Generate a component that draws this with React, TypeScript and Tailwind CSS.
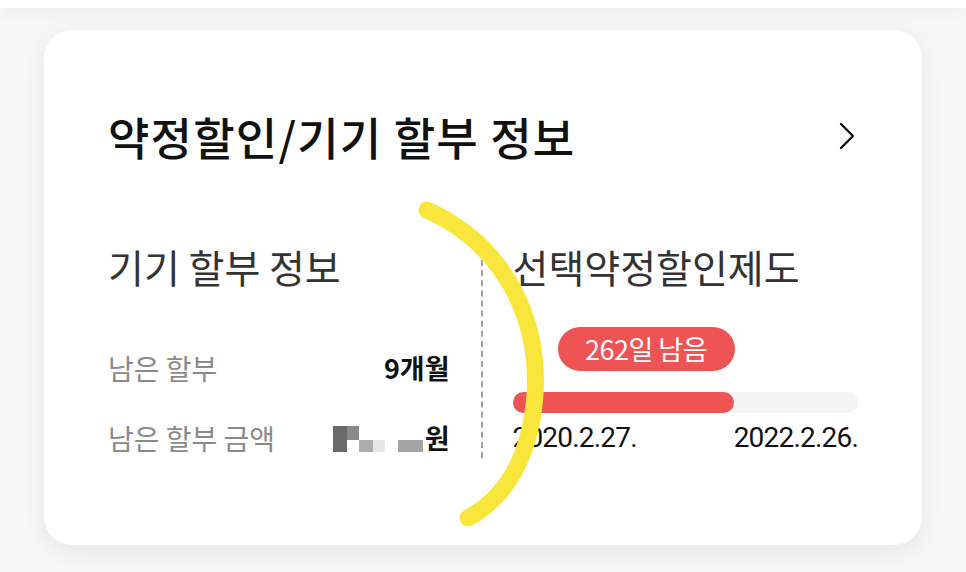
import React from 'react'

const font = { fontFamily: '"Noto Sans CJK KR", "Noto Sans", sans-serif' }

function PixelBlur() {
  // mosaic blur over the amount
  return (
    <div className="relative h-[28px] w-[92px]">
      <div className="absolute left-0 top-[2px] h-[26px] w-[14px] bg-[#6a6a6a]" />
      <div className="absolute left-[14px] top-[2px] h-[14px] w-[12px] bg-[#8a8a8a]" />
      <div className="absolute left-[26px] top-[16px] h-[12px] w-[14px] bg-[#acacac]" />
      <div className="absolute left-[40px] top-[16px] h-[12px] w-[12px] bg-[#e6e6e6]" />
      <div className="absolute left-[65px] top-[16px] h-[12px] w-[25px] bg-[#a3a3a3]" />
    </div>
  )
}

export default function App() {
  const progress = 64

  return (
    <div className="relative h-[572px] w-[966px] overflow-hidden bg-[#f7f7f7]" style={font}>
      <div className="h-[8px] bg-white shadow-[0_4px_14px_rgba(0,0,0,0.05)]" />

      <div className="mx-[44px] mt-[22px] h-[515px] rounded-[28px] bg-white px-[64px] pt-[76px] shadow-[0_6px_24px_rgba(0,0,0,0.07)]">
        <div className="flex h-[60px] items-center justify-between">
          <h1 className="text-[45px] font-medium leading-none tracking-[1.2px] text-[#111]">
            약정할인/기기 할부 정보
          </h1>
          <svg width="20" height="30" viewBox="0 0 20 30" className="mr-[1px]">
            <path d="M4 3 L16 15 L4 27" fill="none" stroke="#111" strokeWidth="2.4" strokeLinecap="round" strokeLinejoin="round" />
          </svg>
        </div>

        <div className="mt-[77px] flex">
          <div className="w-[342px]">
            <div className="text-[39px] leading-[46px] text-[#333]">기기 할부 정보</div>
            <div className="mt-[63px] flex items-center justify-between">
              <span className="text-[28px] leading-[32px] text-[#8a8a8a]">남은 할부</span>
              <span className="text-[27px] font-bold leading-[32px] text-[#111]">9개월</span>
            </div>
            <div className="mt-[38px] flex items-center justify-between">
              <span className="text-[28px] leading-[32px] text-[#8a8a8a]">남은 할부 금액</span>
              <div className="flex items-center">
                <PixelBlur />
                <span className="text-[27px] font-bold leading-[32px] text-[#111]">원</span>
              </div>
            </div>
          </div>

          <div className="ml-[31px] mr-[30px] mt-[7px] h-[208px] border-l-2 border-dashed border-[#a0a0a0]" />

          <div className="w-[346px]">
            <div className="text-[39px] leading-[46px] text-[#333]">선택약정할인제도</div>
            <div className="mt-[38px] flex">
              <div className="ml-[45px] flex h-[44px] w-[177px] items-center justify-center rounded-full bg-[#ef5454] text-[27px] tracking-[-0.5px] text-white">
                262일 남음
              </div>
            </div>
            <div className="mt-[21px] h-[21px] rounded-full bg-[#f4f4f4]">
              <div className="h-full rounded-full bg-[#ef5454]" style={{ width: `${progress}%` }} />
            </div>
            <div className="mt-[9px] flex justify-between text-[28px] leading-[32px] tracking-[-0.8px] text-[#111]" style={{ fontFamily: 'Roboto, "Noto Sans", sans-serif' }}>
              <span>2020.2.27.</span>
              <span>2022.2.26.</span>
            </div>
          </div>
        </div>
      </div>

      <svg className="pointer-events-none absolute left-0 top-0" width="966" height="572">
        <path
          d="M427 210 C505 245 540 320 535 395 C530 458 505 498 468 518"
          fill="none"
          stroke="#f8e63c"
          strokeWidth="17"
          strokeLinecap="round"
        />
      </svg>
    </div>
  )
}
